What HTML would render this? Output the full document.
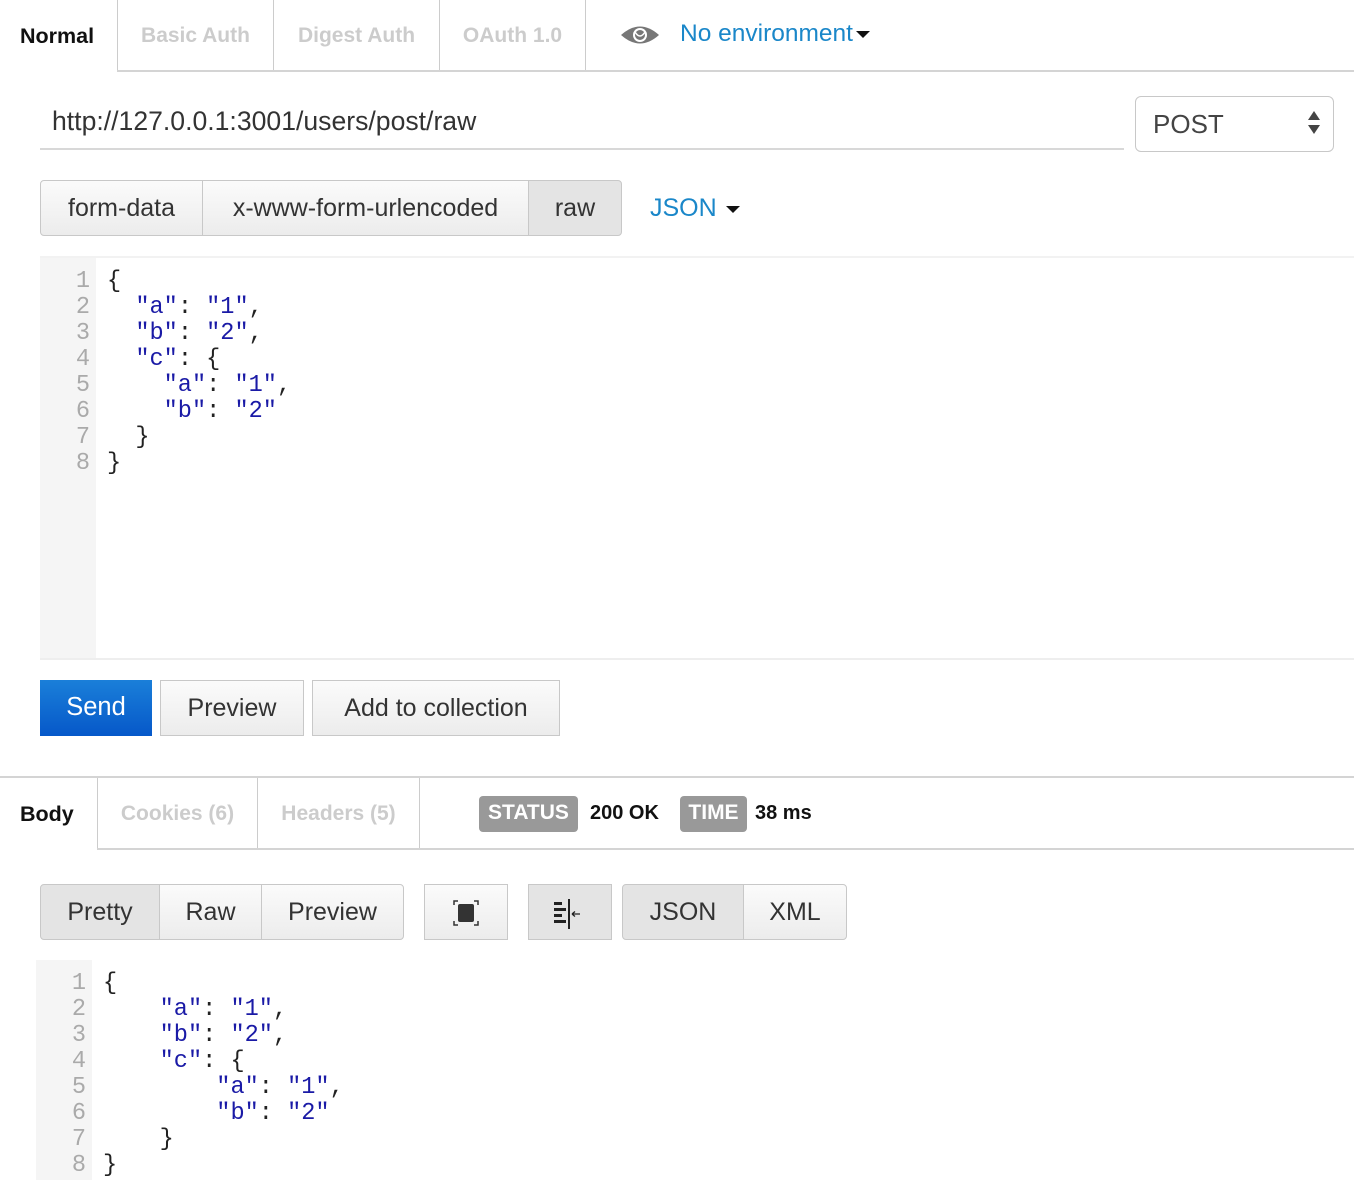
<!DOCTYPE html>
<html><head><meta charset="utf-8"><style>
*{box-sizing:border-box;margin:0;padding:0}
body{width:1354px;height:1180px;background:#fff;font-family:"Liberation Sans",sans-serif;position:relative;overflow:hidden;color:#222}
.a{position:absolute}
.tab{position:absolute;font-weight:bold;font-size:21px;color:#ccc;border-left:1px solid #ccc;text-align:center}
.btn{position:absolute;border:1px solid #c8c8c8;background:linear-gradient(#fbfbfb,#ececec);font-size:25px;color:#333;text-align:center;border-radius:3px}
.code{position:absolute;font-family:"Liberation Mono",monospace;font-size:23.6px;line-height:26px;white-space:pre;color:#222}
.ln{color:#aaa;text-align:right}
.s{color:#1a1aa6}
</style></head><body>
<!-- top tabs -->
<div class="a" style="left:20px;top:24px;font-weight:bold;font-size:21.5px;color:#111">Normal</div>
<div class="a" style="left:117px;top:0;width:1px;height:71px;background:#ccc"></div>
<div class="a" style="left:117px;top:70px;width:1237px;height:2px;background:#d4d4d4"></div>
<div class="tab" style="left:117px;top:0;width:156px;height:70px;line-height:72px">Basic Auth</div>
<div class="tab" style="left:273px;top:0;width:166px;height:70px;line-height:72px">Digest Auth</div>
<div class="tab" style="left:439px;top:0;width:146px;height:70px;line-height:72px">OAuth 1.0</div>
<div class="a" style="left:585px;top:0;width:1px;height:70px;background:#ccc"></div>
<svg class="a" style="left:620px;top:24px" width="40" height="22" viewBox="0 0 40 22"><path d="M1 11 Q20 -6 39 11 Q20 28 1 11Z" fill="#777"/><circle cx="20" cy="11" r="7" fill="#fff"/><circle cx="20" cy="11" r="5" fill="#777"/><path d="M15 8 Q20 16 25 8" stroke="#fff" stroke-width="1.5" fill="none"/></svg>
<div class="a" style="left:680px;top:20px;font-size:24.5px;color:#1a87c9">No environment</div>
<div class="a" style="left:856px;top:31px;border-left:7px solid transparent;border-right:7px solid transparent;border-top:7px solid #111"></div>
<!-- url -->
<div class="a" style="left:52px;top:106px;font-size:26.6px;color:#333">http://127.0.0.1:3001/users/post/raw</div>
<div class="a" style="left:40px;top:148px;width:1084px;height:2px;background:#d8d8d8"></div>
<div class="a" style="left:1135px;top:96px;width:199px;height:56px;border:1px solid #c8c8c8;border-radius:6px;font-size:26px;color:#444;padding:12px 0 0 17px">POST</div>
<div class="a" style="left:1308px;top:111px;border-left:6px solid transparent;border-right:6px solid transparent;border-bottom:9px solid #444"></div>
<div class="a" style="left:1308px;top:125px;border-left:6px solid transparent;border-right:6px solid transparent;border-top:9px solid #444"></div>
<!-- body type -->
<div class="btn" style="left:40px;top:180px;width:163px;height:56px;line-height:54px;border-radius:4px 0 0 4px">form-data</div>
<div class="btn" style="left:202px;top:180px;width:327px;height:56px;line-height:54px;border-radius:0">x-www-form-urlencoded</div>
<div class="btn" style="left:528px;top:180px;width:94px;height:56px;line-height:54px;background:#e4e4e4;border-radius:0 4px 4px 0">raw</div>
<div class="a" style="left:650px;top:194px;font-size:25px;color:#1a87c9">JSON</div>
<div class="a" style="left:726px;top:206px;border-left:7px solid transparent;border-right:7px solid transparent;border-top:7px solid #111"></div>
<!-- editor -->
<div class="a" style="left:40px;top:256px;width:1314px;height:404px;border-top:2px solid #f2f2f2;border-bottom:2px solid #eee"></div>
<div class="a" style="left:40px;top:258px;width:56px;height:400px;background:#f5f5f5"></div>
<div class="code ln" style="left:40px;top:269px;width:50px">1
2
3
4
5
6
7
8</div>
<div class="code" style="left:107px;top:269px">{
  <span class="s">"a"</span>: <span class="s">"1"</span>,
  <span class="s">"b"</span>: <span class="s">"2"</span>,
  <span class="s">"c"</span>: {
    <span class="s">"a"</span>: <span class="s">"1"</span>,
    <span class="s">"b"</span>: <span class="s">"2"</span>
  }
}</div>
<!-- actions -->
<div class="a" style="left:40px;top:680px;width:112px;height:56px;background:linear-gradient(#1a7fd9,#0658c9);color:#fff;font-size:25.5px;text-align:center;line-height:54px">Send</div>
<div class="btn" style="left:160px;top:680px;width:144px;height:56px;line-height:54px;border-radius:0">Preview</div>
<div class="btn" style="left:312px;top:680px;width:248px;height:56px;line-height:54px;border-radius:0">Add to collection</div>
<!-- response tabs -->
<div class="a" style="left:0;top:776px;width:1354px;height:2px;background:#d4d4d4"></div>
<div class="a" style="left:20px;top:802px;font-weight:bold;font-size:21.5px;color:#111">Body</div>
<div class="a" style="left:97px;top:848px;width:1257px;height:2px;background:#d4d4d4"></div>
<div class="tab" style="left:97px;top:778px;width:160px;height:70px;line-height:72px">Cookies (6)</div>
<div class="tab" style="left:257px;top:778px;width:162px;height:70px;line-height:72px">Headers (5)</div>
<div class="a" style="left:419px;top:778px;width:1px;height:70px;background:#ccc"></div>
<div class="a" style="left:479px;top:796px;height:36px;width:99px;background:#999;border-radius:4px;color:#fff;font-weight:bold;font-size:21px;text-align:center;line-height:34px">STATUS</div>
<div class="a" style="left:590px;top:802px;font-weight:bold;font-size:20px;color:#111">200 OK</div>
<div class="a" style="left:680px;top:796px;width:67px;height:36px;background:#999;border-radius:4px;color:#fff;font-weight:bold;font-size:21px;text-align:center;line-height:34px">TIME</div>
<div class="a" style="left:755px;top:802px;font-weight:bold;font-size:20px;color:#111">38 ms</div>
<!-- response buttons -->
<div class="btn" style="left:40px;top:884px;width:120px;height:56px;line-height:54px;background:#e4e4e4;border-radius:4px 0 0 4px">Pretty</div>
<div class="btn" style="left:159px;top:884px;width:103px;height:56px;line-height:54px;border-radius:0">Raw</div>
<div class="btn" style="left:261px;top:884px;width:143px;height:56px;line-height:54px;border-radius:0 4px 4px 0">Preview</div>
<div class="btn" style="left:424px;top:884px;width:84px;height:56px;border-radius:0"></div>
<svg class="a" style="left:453px;top:900px" width="26" height="26" viewBox="0 0 26 26"><path d="M1 5V1h4M21 1h4v4M25 21v4h-4M5 25H1v-4" stroke="#333" stroke-width="1.5" fill="none"/><rect x="5" y="4" width="16" height="18" rx="2" fill="#333"/></svg>
<div class="btn" style="left:528px;top:884px;width:84px;height:56px;background:#e4e4e4;border-radius:0"></div>
<svg class="a" style="left:552px;top:898px" width="36" height="32" viewBox="0 0 36 32"><rect x="2" y="4" width="8" height="3" fill="#222"/><rect x="2" y="10" width="12" height="3" fill="#222"/><rect x="2" y="16" width="8" height="3" fill="#222"/><rect x="2" y="22" width="12" height="3" fill="#222"/><rect x="16" y="1" width="2" height="30" fill="#222"/><path d="M20 16h8M20 16l3-2.5M20 16l3 2.5" stroke="#222" stroke-width="1.3" fill="none"/></svg>
<div class="btn" style="left:622px;top:884px;width:122px;height:56px;line-height:54px;background:#e4e4e4;border-radius:4px 0 0 4px">JSON</div>
<div class="btn" style="left:743px;top:884px;width:104px;height:56px;line-height:54px;border-radius:0 4px 4px 0">XML</div>
<!-- response code -->
<div class="a" style="left:36px;top:960px;width:56px;height:220px;background:#f5f5f5"></div>
<div class="code ln" style="left:36px;top:971px;width:50px">1
2
3
4
5
6
7
8</div>
<div class="code" style="left:103px;top:971px">{
    <span class="s">"a"</span>: <span class="s">"1"</span>,
    <span class="s">"b"</span>: <span class="s">"2"</span>,
    <span class="s">"c"</span>: {
        <span class="s">"a"</span>: <span class="s">"1"</span>,
        <span class="s">"b"</span>: <span class="s">"2"</span>
    }
}</div>
</body></html>
